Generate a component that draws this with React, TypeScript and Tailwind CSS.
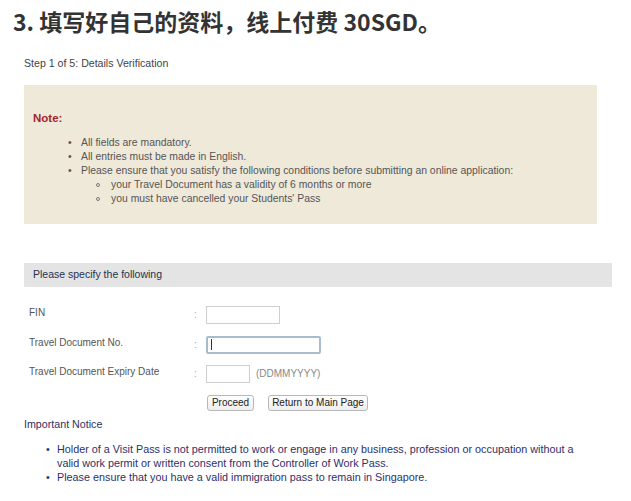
import React from "react";

const NOTE_ITEMS = [
  "All fields are mandatory.",
  "All entries must be made in English.",
  "Please ensure that you satisfy the following conditions before submitting an online application:",
];
const NOTE_SUB = [
  "your Travel Document has a validity of 6 months or more",
  "you must have cancelled your Students' Pass",
];
const NOTICE_ITEMS = [
  "Holder of a Visit Pass is not permitted to work or engage in any business, profession or occupation without a valid work permit or written consent from the Controller of Work Pass.",
  "Please ensure that you have a valid immigration pass to remain in Singapore.",
];

function FormRow({ label, children }: { label: string; children: React.ReactNode }) {
  return (
    <div className="flex items-start h-[18px]">
      <div className="w-[170px] pl-[5px] pt-[1px] text-[10px] leading-[12px] text-[#555]">{label}</div>
      <div className="w-[12px] text-[10px] leading-[18px] text-[#aaa]">:</div>
      {children}
    </div>
  );
}

export default function App() {
  return (
    <div
      className="w-[631px] h-[501px] bg-white overflow-hidden"
      style={{ fontFamily: '"Liberation Sans", Arial, sans-serif' }}
    >
      {/* Title */}
      <div
        className="pl-[13px] pt-[8px] text-[23px] leading-[26px] font-bold text-[#333]"
        style={{ fontFamily: '"Noto Sans CJK SC", "Noto Sans", sans-serif' }}
      >
        3. 填写好自己的资料，线上付费 30SGD。
      </div>

      <div className="mt-[23px] pl-[24px] text-[10.6px] leading-[12px] text-[#444]">
        Step 1 of 5: Details Verification
      </div>

      {/* Note box */}
      <div className="mt-[16px] ml-[24px] w-[573px] h-[139px] bg-[#efe9da] pt-[26px] pl-[9px]">
        <div className="text-[11.5px] leading-[14px] font-bold text-[#a3262a]">Note:</div>
        <div className="mt-[11px] text-[10.4px] leading-[14px] text-[#555]">
          {NOTE_ITEMS.map((t) => (
            <div key={t} className="flex pl-[35px]">
              <span className="w-[13px] shrink-0 text-[#555]">•</span>
              <span>{t}</span>
            </div>
          ))}
          {NOTE_SUB.map((t) => (
            <div key={t} className="flex items-center pl-[63px]">
              <span className="w-[4px] h-[4px] mr-[11px] shrink-0 rounded-full border border-[#777]" />
              <span>{t}</span>
            </div>
          ))}
        </div>
      </div>

      {/* Form header */}
      <div className="mt-[39px] ml-[24px] w-[588px] h-[24px] bg-[#e4e4e4] flex items-center pl-[9px] text-[10.5px] text-[#26324f]">
        Please specify the following
      </div>

      <div className="mt-[19px] ml-[24px] flex flex-col gap-[11.5px]">
        <FormRow label="FIN">
          <div className="w-[74px] h-[18px] border border-[#cfcfcf] bg-white" />
        </FormRow>
        <FormRow label="Travel Document No.">
          <div className="w-[115px] h-[18px] border-2 border-[#a9bccd] bg-white rounded-[2px] flex items-center pl-[3px]">
            <span className="w-[1px] h-[11px] bg-[#333]" />
          </div>
        </FormRow>
        <FormRow label="Travel Document Expiry Date">
          <div className="w-[44px] h-[18px] border border-[#cfcfcf] bg-white" />
          <span className="ml-[6px] text-[10px] leading-[18px] text-[#888]">(DDMMYYYY)</span>
        </FormRow>
        <div className="flex gap-[14px] pl-[183px]">
          <button className="w-[47px] h-[16px] border border-[#b8b8b8] rounded-[3px] bg-gradient-to-b from-white to-[#eeeeee] text-[10px] leading-[14px] text-[#222]">
            Proceed
          </button>
          <button className="w-[100px] h-[16px] border border-[#b8b8b8] rounded-[3px] bg-gradient-to-b from-white to-[#eeeeee] text-[10px] leading-[14px] text-[#222]">
            Return to Main Page
          </button>
        </div>
      </div>

      {/* Important notice */}
      <div className="mt-[7px] pl-[24px] text-[10.7px] leading-[12px] text-[#2f3161]">Important Notice</div>
      <div className="mt-[12px] text-[10.8px] leading-[14px] text-[#2e2f6b]">
        {NOTICE_ITEMS.map((t) => (
          <div key={t} className="flex pl-[46px]">
            <span className="w-[11px] shrink-0">•</span>
            <span className="w-[530px]">{t}</span>
          </div>
        ))}
      </div>
    </div>
  );
}
